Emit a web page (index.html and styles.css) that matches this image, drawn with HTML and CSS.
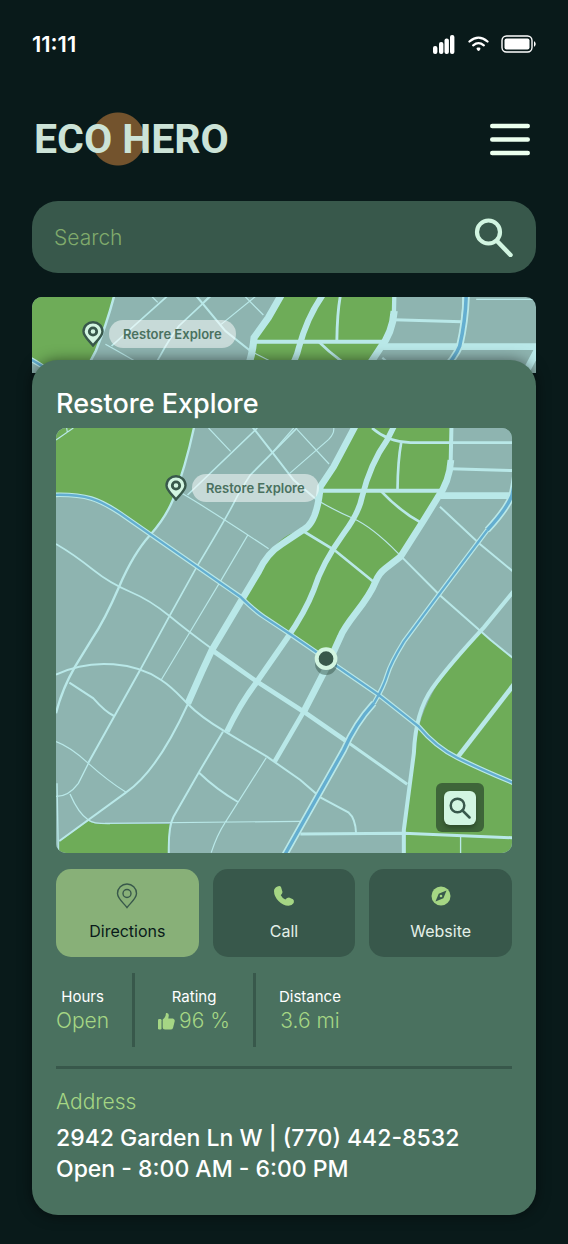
FILE: index.html
```html
<!DOCTYPE html>
<html lang="en">
<head>
<meta charset="utf-8">
<meta name="viewport" content="width=device-width, initial-scale=1">
<title>Eco Hero</title>
<link rel="stylesheet" href="styles.css">
</head>
<body>
<div class="status">
  <span class="time">11:11</span>
  <div class="status-icons">
    <svg width="23" height="19" viewBox="0 0 23 19" fill="#fff"><rect x="0" y="11" width="4.4" height="8" rx="2"/><rect x="6" y="7" width="4.4" height="12" rx="2"/><rect x="11.5" y="3.5" width="4.4" height="15.500" rx="2"/><rect x="17" y="0" width="4.400" height="19" rx="2"/></svg>
    <svg width="21" height="16" viewBox="0 0 21 16" fill="none" stroke="#fff" stroke-width="2.3" stroke-linecap="round"><path d="M1.500 5.500Q10.500-2.200 19.500 5.500M5.200 9.300Q10.500 5 15.800 9.300"/><path d="M9.800 12.800h1.400l-.7.8z" stroke-width="2.500" stroke-linejoin="round"/></svg>
    <svg width="35" height="18" viewBox="0 0 35 18"><rect x="1" y="1" width="30" height="16" rx="4.500" fill="none" stroke="#fff" stroke-width="1.400"/><rect x="3.500" y="3.500" width="25" height="11" rx="2" fill="#fff"/><path d="M33 6q3.500 3 0 6z" fill="#fff"/></svg>
  </div>
</div>
<header class="header">
  <a class="logo" href="#">ECO HERO</a>
  <button class="menu" aria-label="Menu"><svg width="40" height="33" viewBox="0 0 40 33" stroke="#ebffee" stroke-width="4.400" stroke-linecap="round"><path d="M2.200 3h35.600M2.200 16.500h35.600M2.200 30h35.600"/></svg></button>
</header>
<main>
  <form class="search">
    <input type="search" placeholder="Search" aria-label="Search">
    <button type="button" aria-label="Submit search"><svg width="40" height="40" viewBox="0 0 40 40" fill="none" stroke="#d2f5e1" stroke-width="4.200" stroke-linecap="round"><circle cx="14.500" cy="15" r="11.500"/><path d="M23.500 24.500 36.500 38" stroke-width="4.500"/></svg></button>
  </form>

  <div class="map map-back">
    <svg class="streets" viewBox="190 78 1407 228" preserveAspectRatio="none"><use href="#city"/></svg>
    <div class="place place-back">
      <svg class="pin" viewBox="0 0 22 26"><path d="M11 24.500C8 20.500 1.500 15.500 1.500 10.500a9.500 9.300 0 0 1 19 0c0 5-6.500 10-9.500 14z" fill="#d2f5e1" stroke="#38584b" stroke-width="2.400"/><circle cx="11" cy="10.500" r="3.700" fill="none" stroke="#38584b" stroke-width="2.800"/></svg>
      <span class="pill">Restore Explore</span>
    </div>
  </div>

  <section class="panel">
    <h1>Restore Explore</h1>
    <div class="map map-main">
      <svg class="streets" viewBox="18 24 1366 1275" preserveAspectRatio="none">
        <g id="city" fill="none" stroke="#b9e8e8">
          <path d="M0 0H1620V1310H0Z" fill="#8eb4b0" stroke="none"/>
          <g fill="#6eac58" stroke="none">
            <path d="M0 0H436L395 165L368 240Q345 295 300 345L180 265Q120 225 60 225H0Z"/>
            <path d="M924 0H1202L1200 140L1175 215L1120 300L1050 410Q1000 430 975 480C950 550 890 600 870 650L848 700L827 715L720 643L640 590L585 540Q630 440 665 390T758 330Q785 300 810 200Z"/>
            <path d="M1290 635L1400 725V1310H1060V1230L1090 1000L1105 920Q1130 820 1220 710Z"/>
            <path d="M28 1265L115 1203Q130 1212 155 1212H358L352 1310H28Z"/>
          </g>
          <g stroke-width="3.500">
            <path d="M18 60L70 24M50 24L52 38M475 24L541 94M395 220Q480 270 655 386M592 346L510 485L405 660L333 780M648 1013L525 1207Q500 1245 483 1298M165 1210L750 1204M18 965Q60 980 115 1030T228 1117"/>
            <path d="M740 28L836 132M850 24Q852 40 835 58L718 160M666 97L730 24M800 240Q850 270 907 295T1043 400"/>
            <path d="M115 1030L85 1090Q55 1130 18 1129M60 1122Q85 1180 115 1200Q130 1212 180 1211M21 1090L25 1298M1230 1250V1300" stroke-width="4"/>
            <path d="M1430 85H1620"/>
          </g>
          <g stroke-width="5">
            <path d="M436 0Q410 130 368 240Q345 295 300 345Q250 400 207 500T125 658L75 740Q35 810 18 880" stroke-width="7"/>
            <path d="M412 225L615 30L640 0M740 24L600 165Q570 210 550 250Q530 290 440 440L358 588L270 750M18 372Q70 402 130 450Q180 490 240 515T358 588T490 690"/>
            <path d="M590 0L666 97L730 180L800 240M18 764C130 710 260 730 333 780C370 804 390 830 413 852Q450 890 520 932L650 1010L750 1080L810 1132L895 1178Q915 1195 917 1240M270 750L115 1028M58 788L130 835Q165 875 192 888M28 1263L228 1117Q320 1055 413 852M518 935L450 1050L370 1190Q354 1220 356 1300M445 1057Q500 1110 563 1146M1043 400L1167 525L1320 660L1400 725M1168 260L1285 370L1400 465" stroke-width="6"/>
            <path d="M965 24Q1010 65 1080 68H1390M1052 68Q1042 120 1041 210M965 20L940 0M990 212Q1050 275 1110 307M758 333L852 390L970 486" stroke-width="8"/>
            <path d="M1200 146L1390 152M750 1242L1060 1240L1400 1254M485 690L620 785L760 875L890 965L1070 1093" stroke-width="9"/>
            <path d="M485 690L620 785L760 875L890 965" stroke-width="14"/>
            <path d="M1220 1013L1400 780" stroke-width="14"/>
          </g>
          <path d="M810 212H1175M1400 500L1300 622Q1195 735 1145 805T1090 1000L1060 1230V1310" stroke-width="12"/>
          <path d="M1170 227H1620" stroke-width="20"/>
          <path d="M1602 235L1560 320" stroke-width="20"/>
          <path d="M924 0L850 140L810 200Q800 310 758 330L695 372Q650 400 625 455L580 530L485 690L455 755L413 850" stroke-width="20"/>
          <path d="M1203 0L1200 140Q1195 190 1160 235" stroke-width="12"/>
          <path d="M1201 120Q1197 185 1160 235L1120 300L1050 410L1005 445Q985 460 975 485C950 550 890 600 870 650L827 745L760 875" stroke-width="20"/>
          <path d="M827 745L760 875L673 1025" stroke-width="14"/>
          <path d="M1040 0L1010 60Q960 130 935 230Q925 280 880 340Q815 430 790 510Q765 575 710 655L620 785Q570 850 530 935" stroke-width="17"/>
          <g>
            <path d="M0 225C110 220 150 240 210 280L440 440L570 530Q610 570 640 590L720 643L985 825L1105 920Q1155 980 1220 1013T1400 1094M1400 0L1398 78Q1398 150 1384 225Q1370 265 1310 330L1160 530L1060 665Q1020 730 1010 765T970 850" stroke-width="14"/>
            <path d="M970 850Q915 910 880 990L700 1310M1404 0L1402 78Q1400 150 1384 225Q1370 265 1310 330" stroke-width="20"/>
            <path d="M0 225C110 220 150 240 210 280L440 440L570 530Q610 570 640 590L720 643L985 825L1105 920Q1155 980 1220 1013T1400 1094M1310 330L1160 530L1060 665Q1020 730 1010 765T970 850" stroke="#64aed0" stroke-width="7"/>
            <path d="M970 850Q915 910 880 990L700 1310M1404 0L1402 78Q1400 150 1384 225Q1370 265 1310 330" stroke="#64aed0" stroke-width="10"/>
          </g>
        </g>
        <circle cx="827" cy="732" r="33" fill="#38584b" fill-opacity=".5"/>
        <circle cx="827" cy="716" r="28" fill="#38584b" stroke="#d2f5e1" stroke-width="12"/>
      </svg>
      <div class="place place-main">
        <svg class="pin" viewBox="0 0 22 26"><path d="M11 24.500C8 20.500 1.500 15.500 1.500 10.500a9.500 9.300 0 0 1 19 0c0 5-6.500 10-9.500 14z" fill="#d2f5e1" stroke="#38584b" stroke-width="2.400"/><circle cx="11" cy="10.500" r="3.700" fill="none" stroke="#38584b" stroke-width="2.800"/></svg>
        <span class="pill">Restore Explore</span>
      </div>
      <button class="zoom" aria-label="Zoom map"><span><svg width="22" height="22" viewBox="0 0 22 22" fill="none" stroke="#38584b" stroke-width="2.500" stroke-linecap="round"><circle cx="8.500" cy="8.500" r="6.800"/><path d="m13.500 13.500 7 7"/></svg></span></button>
    </div>

    <div class="actions">
      <button class="action active"><svg width="22" height="26" viewBox="0 0 22 26" fill="none" stroke="#38584b" stroke-width="1.400"><path d="M11 24.500C8 20.500 1.500 15.500 1.500 10.500a9.500 9.500 0 0 1 19 0c0 5-6.500 10-9.500 14z"/><circle cx="11" cy="10.500" r="4"/></svg>Directions</button>
      <button class="action"><svg width="22" height="26" viewBox="0 0 22 26" fill="#a5d684"><path d="M4.500 3.500Q7 2.500 8 4L9.500 9Q9.500 10.500 7.800 12.300Q9.500 15.500 12.300 16.600Q14 14.800 16 14.600L20 16.300Q21.500 17.500 20.700 20Q19 22.700 15.500 22.700Q10 22.700 5.500 18T1 8Q1 5 4.500 3.500Z"/></svg>Call</button>
      <button class="action"><svg width="22" height="26" viewBox="0 0 22 26"><circle cx="11" cy="13" r="9.500" fill="#a5d684"/><path d="M16.500 7.500 13.400 15.200 5.500 18.500 8.700 10.700Z" fill="#38584b"/><circle cx="11" cy="13" r="1.300" fill="#a5d684"/></svg>Website</button>
    </div>

    <dl class="stats">
      <div><dt>Hours</dt><dd>Open</dd></div>
      <div><dt>Rating</dt><dd><svg width="17" height="17" viewBox="0 0 17 17" fill="#a5d684"><rect x="0" y="6" width="3.500" height="10.500" rx="1.200"/><path d="M4.700 6.500Q8 4 8-.1Q11 0 10.800 2.500L10.300 5.500H15Q17.500 6.500 16.500 9L15 15Q14.500 16.500 12.500 16.500H7Q4.700 16.500 4.700 14.500Z"/></svg>96 %</dd></div>
      <div><dt>Distance</dt><dd>3.6 mi</dd></div>
    </dl>

    <div class="address">
      <h2>Address</h2>
      <p>2942 Garden Ln W | (770) 442-8532</p>
      <p>Open - 8:00 AM - 6:00 PM</p>
    </div>
  </section>
</main>
</body>
</html>
```

FILE: styles.css
```css
* { box-sizing: border-box; }
body {
  margin: 0;
  padding: 32px 32px 30px;
  background: #091a1a;
  color: #fff;
  font-family: Inter, "Liberation Sans", sans-serif;
}
button { font: inherit; border: 0; padding: 0; background: none; cursor: pointer; }
svg { display: block; flex: none; }
.status { display: flex; justify-content: space-between; align-items: center; height: 24px; }
.time { font-size: 22px; font-weight: 600; line-height: 22px; }
.status-icons { display: flex; align-items: center; gap: 12px; }
.header { display: flex; justify-content: space-between; align-items: center; margin-top: 56px; height: 54px; padding-right: 6px; }
.logo {
  padding: 0 0 0 2px;
  color: #cce3d7;
  font-family: Roboto, sans-serif;
  font-size: 41px;
  font-weight: 700;
  line-height: 54px;
  text-decoration: none;
  white-space: nowrap;
  background: radial-gradient(circle 27px at 86px 27px, #73532d 26px, transparent 27px);
}
.search {
  display: flex;
  align-items: center;
  height: 72px;
  margin-top: 35px;
  padding: 0 22px;
  border-radius: 26px;
  background: #38584b;
}
.search input {
  flex: 1;
  min-width: 0;
  border: 0;
  padding: 0;
  outline: 0;
  background: none;
  color: #d2f5e1;
  font: 300 21px Inter, sans-serif;
}
.search input::placeholder { color: #80ab6c; opacity: 1; }
.map { position: relative; overflow: hidden; border-radius: 10px; background: #8eb4b0; }
.streets { width: 100%; height: 100%; }
.map-back { height: 88px; margin-top: 24px; background: #091a1a; border-radius: 10px 10px 0 0; }
.map-back .streets { height: 76px; }
.map-main { height: 425px; }
.place { position: absolute; display: flex; align-items: center; gap: 5px; }
.place-back { left: 50px; top: 23px; }
.place-main { left: 109px; top: 46px; }
.pin { width: 22px; height: 26px; }
.pill {
  padding: 0 14px;
  border-radius: 14px;
  background: rgba(255, 255, 255, .5);
  color: #4a715f;
  font-size: 13px;
  font-weight: 600;
  line-height: 28px;
}
.zoom {
  position: absolute;
  right: 28px;
  bottom: 21px;
  width: 48px;
  height: 49px;
  display: grid;
  place-items: center;
  border-radius: 6px;
  background: #3e6539;
}
.zoom span { display: grid; place-items: center; width: 32px; height: 34px; border-radius: 6px; background: #d2f5e1; box-shadow: 0 3px 4px rgba(0, 0, 0, .25); }
.panel {
  position: relative;
  margin-top: -25px;
  padding: 28px 24px 30px;
  border-radius: 26px;
  background: #4a715f;
  box-shadow: 0 0 14px rgba(0, 0, 0, .5);
}
h1 { margin: 0 0 8px; font-size: 27px; font-weight: 500; line-height: 32px; }
.actions { display: grid; grid-template-columns: repeat(3, 1fr); gap: 14px; margin-top: 16px; }
.action {
  display: flex;
  flex-direction: column;
  align-items: center;
  gap: 12px;
  height: 88px;
  padding-top: 14px;
  border-radius: 15px;
  background: #38584b;
  color: #e4f0e8;
  font-size: 16px;
  line-height: 20px;
}
.active { background: #88b078; color: #091a1a; }
.stats { display: flex; margin: 16px 0 0; }
.stats div { height: 74px; padding: 12px 23px 0; border-right: 3px solid #38584b; text-align: center; }
.stats div:first-child { padding-left: 0; }
.stats div:last-child { border: 0; }
dt { font-size: 15px; line-height: 24px; }
dd { display: flex; align-items: center; justify-content: center; gap: 4px; margin: 0; color: #a5d684; font-size: 21px; font-weight: 300; line-height: 24px; }
.address { margin-top: 19px; padding-top: 21px; border-top: 3px solid #38584b; }
h2 { margin: 0 0 9px; color: #a5d684; font-size: 21px; font-weight: 300; line-height: 24px; }
p { margin: 0; font-size: 23px; font-weight: 500; line-height: 31px; }
```
